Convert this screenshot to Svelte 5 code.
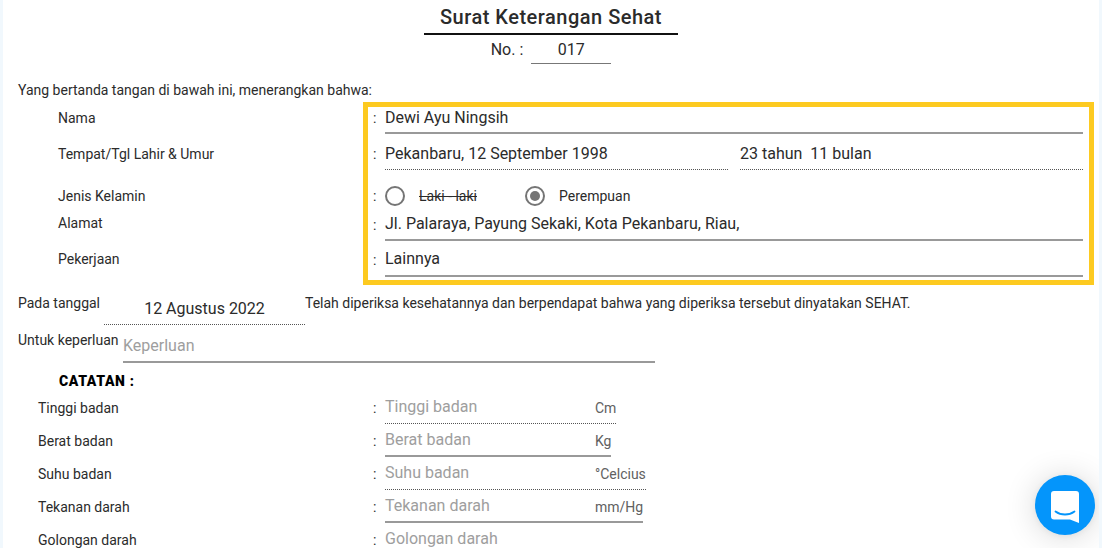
<script>
  const catatan = [
    { label: 'Tinggi badan', unit: 'Cm', width: 231, line: 'dotted' },
    { label: 'Berat badan', unit: 'Kg', width: 226, line: 'solid' },
    { label: 'Suhu badan', unit: '°Celcius', width: 261, line: 'dotted' },
    { label: 'Tekanan darah', unit: 'mm/Hg', width: 258, line: 'solid' }
  ]
</script>

<main class="page">
  <header class="head">
    <h1>Surat Keterangan Sehat</h1>
    <div class="nomor">
      <span>No. :</span>
      <span class="nomor-val">017</span>
    </div>
  </header>

  <p class="intro">Yang bertanda tangan di bawah ini, menerangkan bahwa:</p>

  <div class="identity">
    <div class="labels">
      <div class="lbl l-nama">Nama</div>
      <div class="lbl l-ttl">Tempat/Tgl Lahir &amp; Umur</div>
      <div class="lbl l-jk">Jenis Kelamin</div>
      <div class="lbl l-alamat">Alamat</div>
      <div class="lbl l-kerja">Pekerjaan</div>
    </div>
    <section class="box">
      <div class="row r-nama">
        <span class="colon">:</span>
        <div class="field solid">Dewi Ayu Ningsih</div>
      </div>
      <div class="row r-ttl">
        <span class="colon">:</span>
        <div class="field dotted ttl">Pekanbaru, 12 September 1998</div>
        <div class="field dotted umur">23 tahun&nbsp; 11 bulan</div>
      </div>
      <div class="row r-jk">
        <span class="colon">:</span>
        <span class="radio"></span>
        <span class="opt struck">Laki - laki</span>
        <span class="radio on"></span>
        <span class="opt">Perempuan</span>
      </div>
      <div class="row r-alamat">
        <span class="colon">:</span>
        <div class="field solid">Jl. Palaraya, Payung Sekaki, Kota Pekanbaru, Riau,</div>
      </div>
      <div class="row r-kerja">
        <span class="colon">:</span>
        <div class="field solid">Lainnya</div>
      </div>
    </section>
  </div>

  <div class="pada">
    <span class="pada-lbl">Pada tanggal</span>
    <span class="field dotted tanggal">12 Agustus 2022</span>
    <span class="pada-txt">Telah diperiksa kesehatannya dan berpendapat bahwa yang diperiksa tersebut dinyatakan SEHAT.</span>
  </div>

  <div class="untuk">
    <span class="untuk-lbl">Untuk keperluan</span>
    <span class="field solid keperluan ph">Keperluan</span>
  </div>

  <h2>CATATAN :</h2>

  {#each catatan as c}
    <div class="note">
      <span class="note-lbl">{c.label}</span>
      <span class="colon">:</span>
      <div class="note-field {c.line}" style="width: {c.width}px">
        <span class="ph">{c.label}</span>
        <span class="unit">{c.unit}</span>
      </div>
    </div>
  {/each}
  <div class="note">
    <span class="note-lbl">Golongan darah</span>
    <span class="colon">:</span>
    <div class="note-field"><span class="ph">Golongan darah</span></div>
  </div>

  <button class="chat" aria-label="Chat">
    <svg width="28" height="32" viewBox="0 0 28 32">
      <path d="M3 0H25a3 3 0 0 1 3 3V32L19 28.500H3a3 3 0 0 1-3-3V3a3 3 0 0 1 3-3Z" fill="#fff"/>
      <path d="M4.500 20.500C10 24.500 18 24.500 23.500 20.500" fill="none" stroke="#0495fb" stroke-width="1.800" stroke-linecap="round"/>
    </svg>
  </button>
</main>

<style>
  :global(body) {
    margin: 0;
    background: #fff;
    overflow: hidden;
  }

  .page {
    box-sizing: border-box;
    width: 1102px;
    height: 548px;
    overflow: hidden;
    padding: 0 18px 0 15px;
    border-left: 3px solid #f1f8fd;
    border-right: 3px solid #f1f8fd;
    font-family: Roboto, "Liberation Sans", sans-serif;
    font-size: 14px;
    color: #2b2b2b;
    position: relative;
  }

  .head {
    display: flex;
    flex-direction: column;
    align-items: center;
    margin-right: -3px;
  }

  h1 {
    margin: 0;
    width: 254px;
    height: 35px;
    box-sizing: border-box;
    padding-top: 5px;
    border-bottom: 2px solid #111;
    text-align: center;
    font-size: 20px;
    font-weight: 500;
    line-height: 24px;
    letter-spacing: 0.5px;
  }

  .nomor {
    display: flex;
    gap: 8px;
    height: 29px;
    font-size: 16px;
    line-height: 30px;
  }

  .nomor-val {
    width: 80px;
    text-align: center;
    border-bottom: 1px solid #777;
  }

  .intro {
    margin: 18px 0 0;
    line-height: 16px;
    height: 20px;
  }

  .identity {
    display: flex;
  }

  .labels {
    width: 345px;
    flex: none;
    padding-left: 40px;
    box-sizing: border-box;
    padding-top: 8px;
  }

  .lbl {
    line-height: 16px;
  }

  .l-ttl { margin-top: 20px; }
  .l-jk { margin-top: 26px; }
  .l-alamat { margin-top: 11px; }
  .l-kerja { margin-top: 20px; }

  .box {
    box-sizing: border-box;
    width: 731px;
    height: 183px;
    border: 5px solid #fdca20;
    padding-right: 6px;
  }

  .row {
    display: flex;
    align-items: flex-start;
  }

  .colon {
    width: 12px;
    margin-left: 5px;
    flex: none;
    line-height: 20px;
  }

  .field {
    font-size: 16px;
    box-sizing: border-box;
  }

  .solid {
    border-bottom: 2px solid #999;
  }

  .dotted {
    border-bottom: 1px dotted #555;
  }

  .row .field {
    flex: 1;
    line-height: 20px;
  }

  .r-nama { height: 36px; }
  .r-nama .colon { padding-top: 1px; }
  .r-nama .field { height: 27px; padding-top: 1px; }

  .r-ttl { height: 36px; }
  .r-ttl .colon { padding-top: 1px; }
  .r-ttl .field { height: 27px; padding-top: 1px; }
  .row .ttl { flex: none; width: 343px; }
  .row .umur { flex: none; width: 343px; margin-left: 12px; }

  .r-jk {
    height: 33px;
    align-items: center;
    box-sizing: border-box;
    padding: 8px 0;
  }

  .radio {
    box-sizing: border-box;
    width: 20px;
    height: 20px;
    border-radius: 50%;
    border: 2px solid #757575;
    flex: none;
    position: relative;
  }

  .radio.on::after {
    content: "";
    position: absolute;
    inset: 3px;
    border-radius: 50%;
    background: #757575;
  }

  .opt {
    margin-left: 14px;
  }

  .struck {
    text-decoration: line-through;
    width: 106px;
    flex: none;
  }

  .r-alamat { height: 35px; }
  .r-alamat .field { height: 29px; padding-top: 2px; }
  .r-alamat .colon { padding-top: 3px; }
  .r-kerja { height: 36px; }
  .r-kerja .field { height: 30px; padding-top: 2px; }
  .r-kerja .colon { padding-top: 3px; }

  .pada {
    display: flex;
    align-items: flex-start;
    height: 40px;
    margin-top: 10px;
  }

  .pada-lbl { width: 86px; flex: none; white-space: nowrap; }
  .tanggal {
    width: 201px;
    flex: none;
    height: 30px;
    text-align: center;
    line-height: 28px;
  }

  .untuk {
    display: flex;
    height: 41px;
    margin-top: -3px;
  }

  .untuk-lbl { width: 105px; flex: none; white-space: nowrap; }

  .keperluan {
    width: 532px;
    height: 31px;
    line-height: 20px;
    padding-top: 4px;
  }

  .ph {
    color: #9e9e9e;
    font-size: 16px;
  }

  h2 {
    margin: 0 0 0 41px;
    height: 27px;
    font-size: 14px;
    line-height: 16px;
    letter-spacing: 0.65px;
    font-weight: 900;
    color: #000;
  }

  .note {
    display: flex;
    height: 33px;
  }

  .note-lbl {
    width: 353px;
    padding-left: 20px;
    box-sizing: border-box;
    flex: none;
    line-height: 16px;
  }

  .note .colon {
    width: 12px;
    margin-left: 2px;
    line-height: 16px;
  }

  .note-field {
    display: flex;
    box-sizing: border-box;
    height: 27px;
    margin-top: -3px;
    line-height: 20px;
  }

  .note-field .ph {
    width: 210px;
    flex: none;
  }

  .unit {
    color: #616161;
    white-space: nowrap;
    margin-top: 1px;
  }

  .chat {
    position: absolute;
    left: 1032px;
    top: 475px;
    width: 60px;
    height: 60px;
    border: 0;
    border-radius: 50%;
    background: #0495fb;
    display: flex;
    align-items: center;
    justify-content: center;
    padding: 3px 0 0;
    box-shadow: 0 1px 6px rgba(0, 0, 0, 0.06), 0 2px 32px rgba(0, 0, 0, 0.16);
  }
</style>
